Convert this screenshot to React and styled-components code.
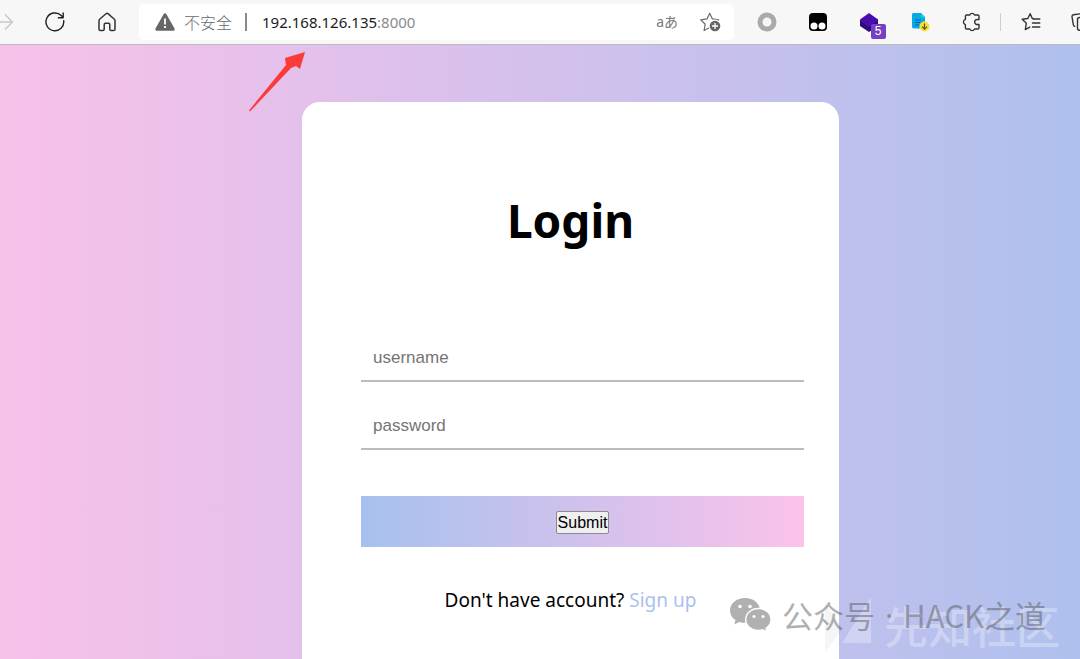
import React from 'react';
import styled, {createGlobalStyle} from 'styled-components';

const App = () => {
    return (
        <>
            <GlobalStyle />
            <Screen>
                <Toolbar />
                <Page>
                    <LoginCard />
                </Page>
                <Pointer viewBox="0 0 58 62" aria-hidden="true">
                    <path d="M1 59.500L38 14 37 7 57 1 52 18 48 15 43 17 2 60.500Z" fill="#fb3b3a" />
                </Pointer>
                <Watermarks />
            </Screen>
        </>
    )
}

const Toolbar = () => {
    return (
        <Bar>
            <EdgeButton aria-label="Forward">
                <svg width="14" height="20" viewBox="0 0 14 20" fill="none" stroke="#c9c9c9" strokeWidth="1.4">
                    <path d="M-4 10H12.500M5 2.500l7.500 7.500L5 17.500" />
                </svg>
            </EdgeButton>
            <IconButton $wide aria-label="Refresh">
                <svg width="20" height="20" viewBox="0 0 20 20" fill="none" stroke="#222" strokeWidth="1.400" strokeLinecap="round" strokeLinejoin="round">
                    <path d="M18.700 8.700A8.900 8.900 0 1 1 16.200 3.600L18 5.500M18.200 1v4.700H13.300" />
                </svg>
            </IconButton>
            <IconButton $wide aria-label="Home">
                <svg width="20" height="20" viewBox="0 0 20 20" fill="none" stroke="#333" strokeWidth="1.500" strokeLinejoin="round">
                    <path d="M2 8.800c0-.8.3-1.300.9-1.800L9 1.700c.6-.5 1.400-.5 2 0L17.100 7c.6.5.9 1 .9 1.800v8.400c0 .8-.5 1.300-1.300 1.300h-2.600c-.8 0-1.300-.5-1.300-1.300v-4.700c0-.8-.5-1.300-1.300-1.300h-3c-.8 0-1.300.5-1.300 1.300v4.700c0 .8-.5 1.300-1.300 1.300H3.300C2.500 18.500 2 18 2 17.200z" />
                </svg>
            </IconButton>
            <AddressBar>
                <svg width="20" height="18" viewBox="0 0 20 18">
                    <path d="M8.700 1c.6-1 2-1 2.600 0l8.200 14.500c.6 1-.1 2.300-1.300 2.300H1.800C.6 17.800-.1 16.500.5 15.500z" fill="#666" />
                    <path d="M9.100 5.500h1.800v6H9.100zM9.100 13h1.800v1.900H9.100z" fill="#fff" />
                </svg>
                <Security>不安全</Security>
                <Separator />
                <Address>192.168.126.135<Port>:8000</Port></Address>
                <Translate aria-label="Translate">aあ</Translate>
                <FavouriteButton aria-label="Add to favourites">
                    <svg width="22" height="20" viewBox="0 0 22 20">
                        <path d="M9.700 1.200l2.700 5.700 6.300.9-4.600 4.400 1.100 6.300-5.500-3-5.600 3 1.100-6.300L.7 7.800 7 6.900z" fill="none" stroke="#6b6b6b" strokeWidth="1.200" strokeLinejoin="round" />
                        <circle cx="15" cy="14" r="6.500" fill="#fff" />
                        <circle cx="15" cy="14" r="5.300" fill="#666" />
                        <path d="M15 11v6M12 14h6" stroke="#fff" strokeWidth="1.300" />
                    </svg>
                </FavouriteButton>
            </AddressBar>
            <IconButton aria-label="Ring extension">
                <svg width="20" height="20" viewBox="0 0 20 20" fill="none">
                    <circle cx="10" cy="10" r="7" stroke="#aaa" strokeWidth="5" />
                </svg>
            </IconButton>
            <IconButton aria-label="Script extension">
                <svg width="20" height="20" viewBox="0 0 20 20">
                    <rect x="1" y="1" width="18" height="18" rx="4" fill="#000" />
                    <circle cx="6" cy="14" r="3.500" fill="#fff" />
                    <circle cx="14" cy="14" r="3.500" fill="#fff" />
                </svg>
            </IconButton>
            <IconButton aria-label="Layers extension">
                <LayersIcon>
                    <svg width="20" height="20" viewBox="0 0 20 20">
                        <path d="M1 9v5l9 6 9-6V7z" fill="#2c0a78" />
                        <path d="M10 1l9 6.500v1.500L10 15 1 9V7.500z" fill="#4a0cae" />
                    </svg>
                    <Badge>5</Badge>
                </LayersIcon>
            </IconButton>
            <IconButton aria-label="Download extension">
                <svg width="20" height="20" viewBox="0 0 20 20">
                    <path d="M3.500 1H11l4 4v11.500H4c-1.500 0-2-.8-2-2v-12C2 1.600 2.600 1 3.500 1z" fill="#08a9e9" />
                    <path d="M11 1l4 4.500h-4z" fill="#19d4cf" />
                    <path d="M5 8h6M5 10.500h5M5 13h4" stroke="#12628c" strokeWidth="1.200" />
                    <circle cx="14.500" cy="14.500" r="5" fill="#f9df3e" />
                    <path d="M14.500 11.500v5.500M12 14.700l2.500 2.500 2.500-2.500" fill="none" stroke="#5e5519" strokeWidth="1.200" />
                </svg>
            </IconButton>
            <IconButton aria-label="Extensions">
                <svg width="20" height="20" viewBox="0 0 20 20" fill="none" stroke="#333" strokeWidth="1.400" strokeLinejoin="round">
                    <path d="M5.700 3h3.100a2.500 2.500 0 0 1 4.700 0h3.200c.9 0 1.300.5 1.300 1.300v3.300c-3-.6-4.300.7-4.300 2.400s1.300 3 4.300 2.400v3.300c0 .8-.5 1.300-1.300 1.300H13.500a2.500 2.500 0 0 1-4.700 0H5.700c-.8 0-1.300-.5-1.300-1.300v-3.100a2.700 2.700 0 0 1 0-5.200V4.300C4.400 3.500 4.900 3 5.700 3z" />
                </svg>
            </IconButton>
            <Divider />
            <IconButton aria-label="Favourites">
                <svg width="20" height="20" viewBox="0 0 20 20" fill="none" stroke="#333" strokeWidth="1.400" strokeLinejoin="round" strokeLinecap="round">
                    <path d="M12.500 6.700L11.300 6.500 9.200 1.700 6.800 6.500l-5.600.8 4.100 4-1 6.300 4.500-2.500M12 7h6.800M11.500 11h7.300M11.500 15h7.300" />
                </svg>
            </IconButton>
            <EdgeButton $end aria-label="Collections">
                <svg width="9" height="20" viewBox="0 0 9 20" fill="none" stroke="#333" strokeWidth="1.400">
                    <path d="M12 1.500L2.500 2.800C1.400 3 .9 3.600 1 4.700l1.300 8c.2 1.200.9 1.700 2 1.900M12 5.500H8.500C7.200 5.500 6.500 6.200 6.500 7.500v8.700c0 1.300.7 2 2 2H12" />
                </svg>
            </EdgeButton>
        </Bar>
    )
}

const LoginCard = () => {
    return (
        <Card>
            <Title>Login</Title>
            <Form onSubmit={(e) => e.preventDefault()}>
                <Field type="text" name="username" placeholder="username" aria-label="username" />
                <Field type="password" name="password" placeholder="password" aria-label="password" />
                <SubmitBar>
                    <Submit type="submit">Submit</Submit>
                </SubmitBar>
            </Form>
            <Message>Don't have account? <SignUp href="#">Sign up</SignUp></Message>
        </Card>
    )
}

const Watermarks = () => {
    return (
        <>
            <Community>
                <svg width="50" height="58" viewBox="0 0 50 58">
                    <path d="M1 7v50L19 32z" fill="#000" opacity=".12" />
                    <path d="M47 1v46H18z" fill="#fff" />
                </svg>
                <span>先知社区</span>
            </Community>
            <Account>
                <svg width="42" height="34" viewBox="0 0 42 34">
                    <path d="M15 0C6.500 0 0 5.500 0 12.500c0 4 2.100 7.300 5.500 9.600L4.300 26.500l5-2.600c2 .6 3.800.9 5.700.9C23.500 24.800 30 19.500 30 12.500S23.500 0 15 0z" />
                    <path d="M28.500 10.500c-7.300 0-12.800 4.900-12.800 11s5.500 11 12.800 11c1.600 0 3-.2 4.400-.7l4.300 2.100-1.100-3.600c3-2 5-5.100 5-8.800 0-6.100-5.400-11-12.600-11z" stroke="#fff" strokeWidth="1.500" />
                    <g fill="#fff">
                        <circle cx="10" cy="8.500" r="1.800" />
                        <circle cx="20" cy="8.500" r="1.800" />
                        <circle cx="24" cy="18.500" r="1.600" />
                        <circle cx="33" cy="18.500" r="1.600" />
                    </g>
                </svg>
                <span>公众号</span>
                <Dot>·</Dot>
                <span>HACK之道</span>
            </Account>
        </>
    )
}

//Styles
const GlobalStyle = createGlobalStyle`
    * {
        box-sizing: border-box;
    }
    body {
        margin: 0;
        font-family: "Noto Sans", "Noto Sans CJK SC", sans-serif;
    }
`
const Screen = styled.div`
    position: relative;
    display: flex;
    flex-direction: column;
    min-height: 100vh;
    overflow: hidden;
`
const Bar = styled.header`
    display: flex;
    align-items: center;
    padding: 4px 0;
    background-color: #f7f7f7;
    border-bottom: 1px solid #bdbabf;
`
const IconButton = styled.button`
    display: flex;
    flex: none;
    justify-content: center;
    align-items: center;
    width: ${(props) => props.$wide ? '52px' : '51px'};
    height: 34px;
    padding: 0;
    border: none;
    background: none;
`
const EdgeButton = styled(IconButton)`
    width: ${(props) => props.$end ? '24px' : '29px'};
    justify-content: ${(props) => props.$end ? 'flex-end' : 'flex-start'};
`
const AddressBar = styled.div`
    display: flex;
    flex: 1;
    align-items: center;
    height: 36px;
    margin: 0 7px 0 6px;
    padding: 0 12px 0 16px;
    border-radius: 5px;
    background-color: #fff;
    font-size: 15px;
    line-height: 20px;
    white-space: nowrap;
`
const Security = styled.span`
    margin-left: 9px;
    color: #6a6a6a;
    font-family: "Noto Sans CJK SC", sans-serif;
    font-size: 16px;
    font-weight: 300;
`
const Separator = styled.span`
    width: 2px;
    height: 18px;
    margin: 0 15px 0 13px;
    background-color: #8a8a8a;
`
const Address = styled.span`
    flex: 1;
    color: #1b1b1b;
`
const Port = styled.span`color: #8a8a8a;`

const Translate = styled.button`
    padding: 0;
    border: none;
    background: none;
    color: #777;
    font-family: "Noto Sans", "Noto Sans CJK JP", sans-serif;
    font-size: 14px;
    line-height: 20px;
`
const FavouriteButton = styled(IconButton)`
    width: 22px;
    margin-left: 22px;
`
const LayersIcon = styled.span`
    position: relative;
    display: flex;
`
const Badge = styled.span`
    position: absolute;
    left: 12px;
    top: 12px;
    width: 15px;
    border-radius: 2px;
    background-color: #7440c4;
    color: #fff;
    font-size: 12px;
    line-height: 15px;
    text-align: center;
`
const Divider = styled.span`
    width: 1px;
    height: 18px;
    margin: 0 4px;
    background-color: #cfcfcf;
`
const Page = styled.main`
    display: flex;
    flex: 1;
    justify-content: center;
    padding: 57px 0 0 61px;
    background-image: linear-gradient(to right, #f8c1ea, #a9c0ee 108%);
`
const Card = styled.section`
    width: 537px;
    padding: 86px 59px 0;
    border-radius: 18px 18px 0 0;
    background-color: #fff;
`
const Title = styled.h1`
    margin: 0 0 84px;
    font-size: 46px;
    line-height: 64px;
    text-align: center;
`
const Form = styled.form`
    display: flex;
    flex-direction: column;
    gap: 22px;
    margin-right: -24px;
`
const Field = styled.input`
    width: 100%;
    height: 46px;
    padding: 0 12px;
    border: none;
    border-bottom: 2px solid #bdbdbd;
    outline: none;
    font-family: "Liberation Sans", sans-serif;
    font-size: 17px;

    &::placeholder {
        color: #757575;
    }
`
const SubmitBar = styled.div`
    display: flex;
    justify-content: center;
    margin-top: 24px;
    padding: 15px 0 13px;
    background-image: linear-gradient(to right, #a6c1ee, #fbc2eb);
`
const Submit = styled.button`
    padding: 0 1px;
    border: 1px solid #8a8a8a;
    border-radius: 2px;
    background-color: #efefef;
    color: #000;
    font-family: "Liberation Sans", sans-serif;
    font-size: 16px;
    line-height: 21px;
`
const Message = styled.p`
    margin: 39px 0 0;
    font-size: 19px;
    line-height: 28px;
    text-align: center;
`
const SignUp = styled.a`
    color: #abc1ee;
    text-decoration: none;
`
const Pointer = styled.svg`
    position: absolute;
    left: 248px;
    top: 51px;
    width: 58px;
    height: 62px;
`
const Watermark = styled.div`
    position: absolute;
    display: flex;
    align-items: center;
    font-family: "Noto Sans CJK SC", sans-serif;
    white-space: nowrap;
    pointer-events: none;
`
const Community = styled(Watermark)`
    right: 20px;
    bottom: 5px;
    gap: 10px;
    color: #fff;
    font-size: 44px;
    font-weight: 500;
    line-height: 58px;
    opacity: 0.3;
`
const Account = styled(Watermark)`
    right: 34px;
    bottom: 25px;
    gap: 10px;
    color: #555;
    font-size: 31px;
    line-height: 38px;
    opacity: 0.46;

    svg {
        fill: #555;
    }
`
const Dot = styled.span`font-family: "Open Sans", sans-serif;`

export default App
